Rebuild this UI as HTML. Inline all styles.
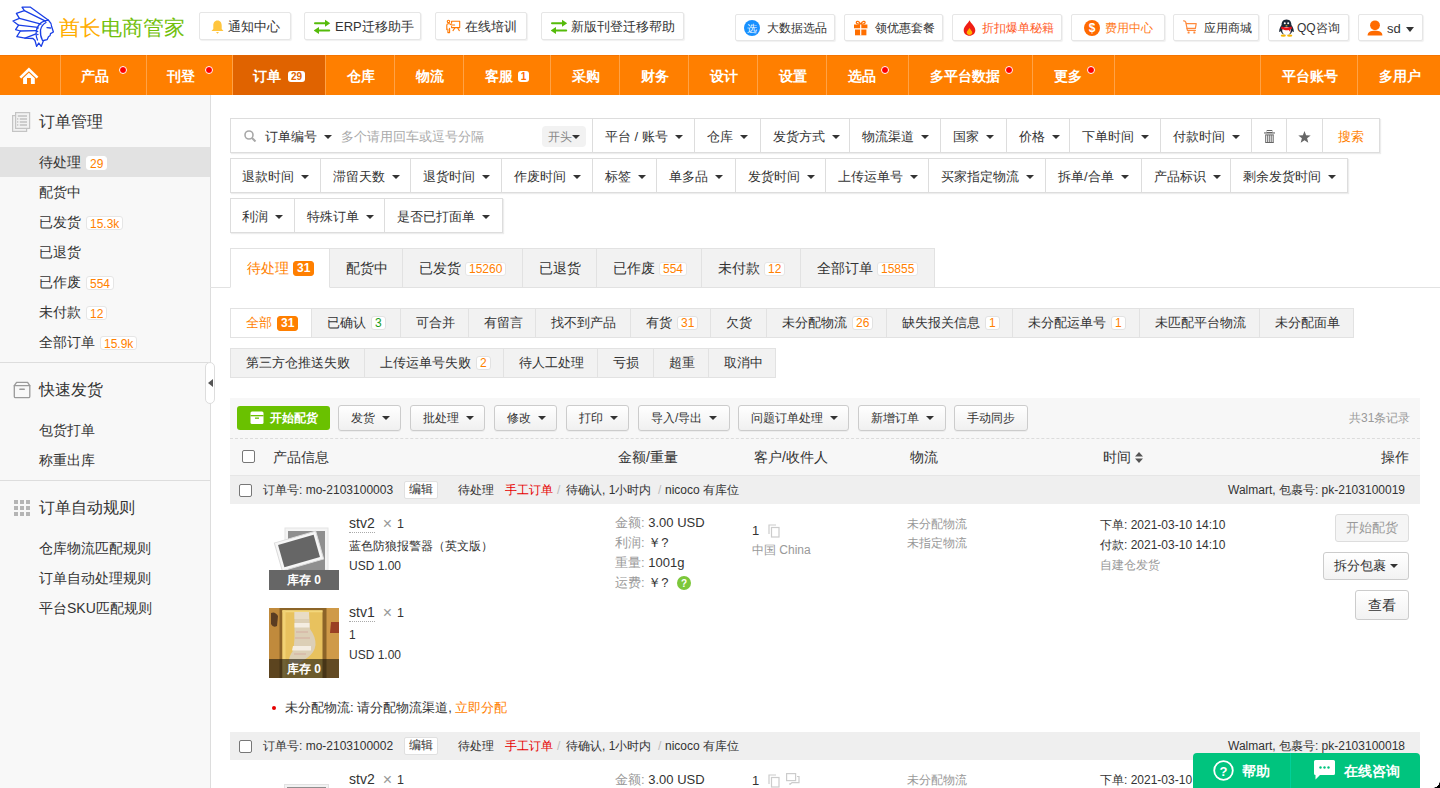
<!DOCTYPE html>
<html><head><meta charset="utf-8">
<style>
*{box-sizing:border-box;}
html,body{margin:0;padding:0;}
body{width:1440px;height:788px;overflow:hidden;position:relative;background:#fff;font-family:"Liberation Sans",sans-serif;color:#333;}
.abs{position:absolute;}
/* header */
.hb{position:absolute;top:12px;height:28px;border:1px solid #e6e6e6;border-radius:2px;background:#fff;box-shadow:1px 1px 1px rgba(0,0,0,.06);font-size:13px;line-height:28px;white-space:nowrap;}
.hb2{top:14px;height:27px;font-size:12px;line-height:27px;}
.hb .ic{position:absolute;}
.hb .t{position:absolute;top:0;}
/* nav */
.nav{position:absolute;left:0;top:55px;width:1440px;height:40px;background:#ff7f00;border-top:1px solid #f57400;}
.ni{position:absolute;top:-1px;height:40px;border-left:1px solid #ffa246;color:#fff;font-weight:bold;font-size:14px;line-height:40px;}
.ni .t{position:absolute;top:1px;}
.dot{position:absolute;top:11px;width:8px;height:8px;border-radius:50%;background:#f00;border:1px solid #fff;}
.nbadge{position:absolute;top:16px;height:11px;background:#fff;color:#ff6a00;border-radius:3px;font-size:10px;line-height:11px;text-align:center;}
/* sidebar */
.side{position:absolute;left:0;top:95px;width:211px;height:693px;background:#f8f8f8;border-right:1px solid #ddd;}
.sh{position:absolute;left:39px;font-size:16px;line-height:20px;color:#333;}
.si{position:absolute;left:39px;font-size:14px;line-height:20px;color:#333;white-space:nowrap;}
.sbadge{display:inline-block;vertical-align:top;margin-top:4px;margin-left:5px;height:14px;padding:0 3px;border:1px solid #e6e6e6;border-radius:3px;background:#fff;color:#ff7f00;font-size:12px;line-height:14px;}
.sdiv{position:absolute;left:0;width:210px;height:1px;background:#ddd;}

/* main */
.fr{position:absolute;left:230px;height:35px;border:1px solid #ddd;box-shadow:1px 1px 1px rgba(0,0,0,.07);background:#fff;}
.fi{position:absolute;top:0;height:33px;border-left:1px solid #ddd;font-size:13px;line-height:36px;color:#333;white-space:nowrap;padding-left:12px;}
.fi:first-child{border-left:none;}
.car{display:inline-block;vertical-align:middle;margin-left:7px;margin-top:-2px;width:0;height:0;border-left:4px solid transparent;border-right:4px solid transparent;border-top:4px solid #333;}
.tabs{position:absolute;left:210px;top:248px;width:1230px;height:40px;border-bottom:1px solid #e2e2e2;}
.tb{position:absolute;top:248px;height:40px;background:#f2f2f2;border:1px solid #e2e2e2;border-left:none;font-size:14px;line-height:38px;color:#333;padding-left:16px;white-space:nowrap;}
.tb.act{background:#fff;color:#ff7f00;border-left:1px solid #e2e2e2;border-bottom:1px solid #fff;height:40px;}
.tbd{display:inline-block;vertical-align:top;margin-top:13px;margin-left:4px;height:14px;padding:0 3px;border:1px solid #e6e6e6;border-radius:3px;background:#fff;color:#ff7f00;font-size:12px;line-height:12px;}
.tbd.fill{background:#ff7f00;border-color:#ff7f00;color:#fff;font-weight:bold;height:15px;line-height:13px;margin-top:12px;}
.st{position:absolute;height:30px;background:#f2f2f2;border:1px solid #e2e2e2;}
.sti{position:absolute;top:0;height:28px;border-left:1px solid #e2e2e2;font-size:13px;line-height:28px;color:#333;padding-left:15px;white-space:nowrap;}
.sti:first-child{border-left:none;}
.sti.act{background:#fff;color:#ff7f00;}
.std{display:inline-block;vertical-align:top;margin-top:7px;margin-left:5px;height:14px;padding:0 3px;border:1px solid #e2e2e2;border-radius:3px;background:#fff;color:#ff7f00;font-size:12px;line-height:12px;}
.std.fill{background:#ff7f00;border-color:#ff7f00;color:#fff;font-weight:bold;height:15px;line-height:13px;}
.btn{position:absolute;top:405px;height:26px;border:1px solid #ccc;border-radius:3px;background:linear-gradient(#fff,#f0f0f0);font-size:12px;line-height:24px;color:#333;padding-left:12px;white-space:nowrap;box-shadow:0 1px 0 rgba(0,0,0,.04);}
.cb{position:absolute;width:13px;height:13px;border:1px solid #777;border-radius:2px;background:#fff;}
.th{position:absolute;top:448px;font-size:14px;line-height:18px;color:#333;white-space:nowrap;}
.oh{position:absolute;left:230px;width:1190px;height:28px;background:#efefef;font-size:12px;line-height:28px;color:#333;white-space:nowrap;}
.oh span{position:absolute;top:0;}
.oh .tag{position:absolute;top:5px;height:18px;border:1px solid #e0e0e0;border-radius:2px;background:#fff;line-height:15px;padding:0 4px;font-size:12px;}
.t12{position:absolute;font-size:12px;line-height:16px;white-space:nowrap;color:#333;}
.gray{color:#999;}
.ab{position:absolute;border:1px solid #ccc;border-radius:3px;background:linear-gradient(#fff,#f2f2f2);font-size:13px;color:#333;white-space:nowrap;text-align:center;}
</style></head>
<body>
<!-- HEADER -->
<svg class="abs" style="left:0;top:0" width="58" height="50" viewBox="0 0 58 50">
<g fill="none" stroke="#1a3fe6" stroke-width="1.3" stroke-linejoin="round" stroke-linecap="round">
<path d="M22 7.2 L30.5 7.2 L48.5 20.2 Q51.5 23 51.6 26.5 L53.4 32 L50.5 33.6 Q50.6 36 48.6 36.6 L47.2 39.6 L43.5 40.5 L41.2 46.4 L38.8 43 L36.6 46.4 L35 40.5 L33 38.5 L25 38.2 L16.8 36.6 L20.3 31 L15.6 29.6 L18.6 25.2 L13 21 L19.4 18.3 L16.4 13.3 L24.4 10.7 Z"/>
<path d="M24.4 10.7 L45.5 21.2"/>
<path d="M19.4 18.3 L41 24.2"/>
<path d="M18.6 25.2 L38 27.4"/>
<path d="M20.3 31 L36.6 30.6"/>
<path d="M25 38.2 L36 33.8"/>
<path d="M48.5 20.2 Q40 21 37 28 Q35 35 37.5 40"/>
<path d="M46 22.5 Q41.5 25 40.5 30 Q40 36 42.5 40.5"/>
<path d="M47 27.6 L50.5 28"/>
</g>
<g fill="#1a3fe6"><circle cx="38.6" cy="25.5" r="0.8"/><circle cx="37.8" cy="28.5" r="0.8"/><circle cx="37.5" cy="31.5" r="0.8"/><circle cx="37.8" cy="34.5" r="0.8"/></g>
</svg>
<div class="abs" style="left:59px;top:14.5px;font-size:20.8px;line-height:26px;white-space:nowrap;font-weight:500;"><span style="color:#ffad00">酋长</span><span style="color:#72c00c">电商管家</span></div>

<div class="hb" style="left:199px;width:92px;">
 <svg class="ic" style="left:11px;top:7px" width="13" height="14" viewBox="0 0 13 14"><path d="M6.5 0.5 C3.5 0.5 2.3 3 2.3 5.5 L2.3 9 L0.5 11 L12.5 11 L10.7 9 L10.7 5.5 C10.7 3 9.5 0.5 6.5 0.5Z M5 12 L8 12 L6.5 13.8Z" fill="#ffc53d"/></svg>
 <span class="t" style="left:28px">通知中心</span></div>
<div class="hb" style="left:304px;width:117px;">
 <svg class="ic" style="left:9px;top:6px" width="17" height="16" viewBox="0 0 17 16"><g fill="#55bb0a"><rect x="0" y="3.3" width="12" height="2" rx="1"/><path d="M11 0.8 L16.2 4.3 L11 7.8Z"/><rect x="4" y="10.5" width="12.2" height="2" rx="1"/><path d="M5 8 L-0.2 11.5 L5 15Z"/></g></svg>
 <span class="t" style="left:30px">ERP迁移助手</span></div>
<div class="hb" style="left:435px;width:92px;">
 <svg class="ic" style="left:9px;top:6px" width="17" height="16" viewBox="0 0 17 16"><g fill="none" stroke="#ff7800" stroke-width="1.1" stroke-linecap="round" stroke-linejoin="round"><circle cx="3.5" cy="2.4" r="1.2"/><path d="M1.8 10.6 V6.2 Q1.8 4.8 3.2 4.8 H4.6 L6.6 6 H9.6"/><path d="M2.9 10 V13.6 H4.6 V9.4"/><path d="M6.6 4.2 V2.3 H14.7 V8.6 H6.6 V7.6"/><path d="M8 11.6 L10 8.8 M12.6 8.8 L14.3 11.6"/></g></svg>
 <span class="t" style="left:29px">在线培训</span></div>
<div class="hb" style="left:541px;width:143px;">
 <svg class="ic" style="left:9px;top:6px" width="17" height="16" viewBox="0 0 17 16"><g fill="#55bb0a"><rect x="0" y="3.3" width="12" height="2" rx="1"/><path d="M11 0.8 L16.2 4.3 L11 7.8Z"/><rect x="4" y="10.5" width="12.2" height="2" rx="1"/><path d="M5 8 L-0.2 11.5 L5 15Z"/></g></svg>
 <span class="t" style="left:29px">新版刊登迁移帮助</span></div>

<div class="hb hb2" style="left:735px;width:100px;">
 <svg class="ic" style="left:8px;top:5px" width="16" height="16" viewBox="0 0 16 16"><circle cx="8" cy="8" r="8" fill="#1890ff"/><text x="8" y="12" font-size="10" fill="#fff" text-anchor="middle" font-family="Liberation Sans">选</text></svg>
 <span class="t" style="left:31px">大数据选品</span></div>
<div class="hb hb2" style="left:844px;width:99px;">
 <svg class="ic" style="left:9px;top:5px" width="14" height="16" viewBox="0 0 14 16"><g fill="#ff6f00"><rect x="0" y="4.5" width="13.4" height="4"/><rect x="1" y="9.3" width="11.4" height="6"/></g><g fill="none" stroke="#ff6f00" stroke-width="1.3"><path d="M6.7 4.3 C5 1 2.3 0.6 2.3 2.6 C2.3 4 4.5 4.3 6.7 4.3Z"/><path d="M6.7 4.3 C8.4 1 11.1 0.6 11.1 2.6 C11.1 4 8.9 4.3 6.7 4.3Z"/></g><rect x="6.1" y="4.5" width="1.2" height="11" fill="#fff"/><rect x="0" y="8.5" width="13.4" height="0.8" fill="#fff"/></svg>
 <span class="t" style="left:30px">领优惠套餐</span></div>
<div class="hb hb2" style="left:952px;width:110px;">
 <svg class="ic" style="left:10px;top:5px" width="13" height="16" viewBox="0 0 13 16"><path d="M6.5 0.3 C8 3.5 12.3 6.5 12.3 10.3 C12.3 13.5 9.8 15.8 6.5 15.8 C3.2 15.8 0.7 13.5 0.7 10.3 C0.7 6.5 5 3.5 6.5 0.3Z" fill="#f01e14"/><path d="M6.5 8 C7.5 10 9.3 11 9.3 12.6 C9.3 14.2 8 15 6.5 15 C5 15 3.7 14.2 3.7 12.6 C3.7 11 5.5 10 6.5 8Z" fill="#ffb300"/></svg>
 <span class="t" style="left:29px;color:#ff5a1f">折扣爆单秘籍</span></div>
<div class="hb hb2" style="left:1071px;width:94px;">
 <svg class="ic" style="left:12px;top:5px" width="16" height="16" viewBox="0 0 16 16"><circle cx="8" cy="8" r="8" fill="#ff6a00"/><text x="8" y="12.3" font-size="12" font-weight="bold" fill="#fff" text-anchor="middle" font-family="Liberation Sans">$</text></svg>
 <span class="t" style="left:33px;color:#ff7a1a">费用中心</span></div>
<div class="hb hb2" style="left:1173px;width:86px;">
 <svg class="ic" style="left:9px;top:5px" width="14" height="15" viewBox="0 0 14 15"><g fill="none" stroke="#ff8a3d" stroke-width="1.2" stroke-linejoin="round" stroke-linecap="round"><path d="M0.6 0.8 Q2.2 0.6 2.8 2.2 L4.4 10.4 H12.4"/><path d="M3.3 3.6 H13.2 L12.4 8.4 H4"/></g><g fill="#ff8a3d"><rect x="4.6" y="11.6" width="2" height="2" rx="0.5"/><rect x="10.4" y="11.6" width="2" height="2" rx="0.5"/></g></svg>
 <span class="t" style="left:30px">应用商城</span></div>
<div class="hb hb2" style="left:1268px;width:81px;">
 <svg class="ic" style="left:9px;top:4px" width="17" height="18" viewBox="0 0 17 18"><path d="M8.5 0.5 C4.5 0.5 3.6 3.5 3.6 6 C2.5 7.5 1 10 1.2 12.5 C1.5 13.5 2.2 12.8 2.8 12 C3.2 13.5 4 14.5 5 15.2 H12 C13 14.5 13.8 13.5 14.2 12 C14.8 12.8 15.5 13.5 15.8 12.5 C16 10 14.5 7.5 13.4 6 C13.4 3.5 12.5 0.5 8.5 0.5Z" fill="#1c2a3a"/><ellipse cx="8.5" cy="11.8" rx="4.3" ry="4" fill="#fff"/><path d="M3.4 7.4 Q8.5 9.6 13.6 7.4 L14 9.6 Q12.5 10.5 12 10.6 L12.4 13 L10.6 11 Q8.5 11.4 6.4 11 Q4.5 10.5 3 9.6Z" fill="#e8141c"/><circle cx="6.8" cy="4.2" r="1" fill="#fff"/><circle cx="10.2" cy="4.2" r="1" fill="#fff"/><path d="M6.8 5.6 Q8.5 7 10.2 5.6 L8.5 7.2Z" fill="#f7b500"/><ellipse cx="5.3" cy="16.6" rx="2.6" ry="1.2" fill="#f7b500"/><ellipse cx="11.7" cy="16.6" rx="2.6" ry="1.2" fill="#f7b500"/></svg>
 <span class="t" style="left:28px">QQ咨询</span></div>
<div class="hb hb2" style="left:1358px;width:65px;">
 <svg class="ic" style="left:8px;top:5px" width="16" height="16" viewBox="0 0 16 16"><circle cx="8" cy="5.3" r="4.9" fill="#ff6a00"/><path d="M0.6 15.5 C0.6 12 3.5 10.8 8 10.8 C12.5 10.8 15.4 12 15.4 15.5Z" fill="#ff6a00"/></svg>
 <span class="t" style="left:28px;font-size:13px;">sd</span>
 <svg class="ic" style="left:47px;top:12px" width="8" height="5" viewBox="0 0 8 5"><path d="M0 0 H8 L4 5Z" fill="#333"/></svg></div>

<!-- NAV -->
<div class="nav">
 <div class="ni" style="left:0;width:60px;border-left:none;">
  <svg class="abs" style="left:19px;top:11px" width="21" height="19" viewBox="-1 -1 21 19"><path d="M8.9 0.6 L18.4 9.8 L16.6 11.6 L8.9 4.2 L1.2 11.6 L-0.6 9.8Z" fill="#fff"/><path d="M3.1 11.2 L8.9 5.7 L14.8 11.2 V17 H10.9 V10.9 H7 V17 H3.1Z" fill="#fff"/></svg></div>
 <div class="ni" style="left:60px;width:86px;"><span class="t" style="left:20px">产品</span><span class="dot" style="left:58px"></span></div>
 <div class="ni" style="left:146px;width:86px;"><span class="t" style="left:20px">刊登</span><span class="dot" style="left:58px"></span></div>
 <div class="ni" style="left:232px;width:93px;background:#e06300;"><span class="t" style="left:20px">订单</span><span class="nbadge" style="left:55px;width:17px;color:#e06300">29</span></div>
 <div class="ni" style="left:325px;width:69px;"><span class="t" style="left:21px">仓库</span></div>
 <div class="ni" style="left:394px;width:69px;"><span class="t" style="left:21px">物流</span></div>
 <div class="ni" style="left:463px;width:87px;"><span class="t" style="left:21px">客服</span><span class="nbadge" style="left:54px;width:11px;top:16px;height:11px;line-height:11px;font-weight:bold;">1</span></div>
 <div class="ni" style="left:550px;width:69px;"><span class="t" style="left:21px">采购</span></div>
 <div class="ni" style="left:619px;width:69px;"><span class="t" style="left:21px">财务</span></div>
 <div class="ni" style="left:688px;width:69px;"><span class="t" style="left:21px">设计</span></div>
 <div class="ni" style="left:757px;width:69px;"><span class="t" style="left:21px">设置</span></div>
 <div class="ni" style="left:826px;width:82px;"><span class="t" style="left:21px">选品</span><span class="dot" style="left:54px"></span></div>
 <div class="ni" style="left:908px;width:124px;"><span class="t" style="left:21px">多平台数据</span><span class="dot" style="left:96px"></span></div>
 <div class="ni" style="left:1032px;width:82px;"><span class="t" style="left:21px">更多</span><span class="dot" style="left:54px"></span></div>
 <div class="ni" style="left:1114px;width:146px;"></div>
 <div class="ni" style="left:1260px;width:97px;"><span class="t" style="left:21px">平台账号</span></div>
 <div class="ni" style="left:1357px;width:83px;"><span class="t" style="left:21px">多用户</span></div>
</div>

<!-- SIDEBAR -->
<div class="side">
 <svg class="abs" style="left:12px;top:17px" width="19" height="20" viewBox="0 0 19 20"><g fill="#f2f2f2" stroke="#c4c4c4" stroke-width="1.2"><rect x="0.6" y="3.6" width="14" height="15.8"/><rect x="3.6" y="0.6" width="14" height="15.8"/></g><g stroke="#bdbdbd" stroke-width="1.4"><path d="M5.8 4 H15"/><path d="M7.8 7 H15"/><path d="M7.8 10 H15"/><path d="M7.8 13 H15"/></g><g fill="#bdbdbd"><rect x="5" y="6.3" width="1.3" height="1.3"/><rect x="5" y="9.3" width="1.3" height="1.3"/><rect x="5" y="12.3" width="1.3" height="1.3"/></g></svg>
 <div class="sh" style="top:17px">订单管理</div>
 <div class="abs" style="left:0;top:52px;width:210px;height:30px;background:#e2e2e2"></div>
 <div class="si" style="top:57px">待处理<span class="sbadge" style="border-color:#fff">29</span></div>
 <div class="si" style="top:87px">配货中</div>
 <div class="si" style="top:117px">已发货<span class="sbadge">15.3k</span></div>
 <div class="si" style="top:147px">已退货</div>
 <div class="si" style="top:177px">已作废<span class="sbadge">554</span></div>
 <div class="si" style="top:207px">未付款<span class="sbadge">12</span></div>
 <div class="si" style="top:237px">全部订单<span class="sbadge">15.9k</span></div>
 <div class="sdiv" style="top:267px"></div>
 <svg class="abs" style="left:13px;top:286px" width="18" height="18" viewBox="0 0 18 18"><g fill="none" stroke="#9a9a9a" stroke-width="1.3" stroke-linejoin="round" stroke-linecap="round"><path d="M3.6 1.3 H14.6 L16.8 4.7 H1.3Z"/><path d="M1.3 4.7 V15.4 Q1.3 16.6 2.5 16.6 H15.6 Q16.8 16.6 16.8 15.4 V4.7"/><path d="M6.9 8.3 H11.2" stroke-width="1.6"/></g></svg>
 <div class="sh" style="top:285px">快速发货</div>
 <div class="si" style="top:325px">包货打单</div>
 <div class="si" style="top:355px">称重出库</div>
 <div class="sdiv" style="top:385px"></div>
 <svg class="abs" style="left:14px;top:405px" width="16" height="16" viewBox="0 0 16 16"><g fill="#b5b5b5"><rect x="0" y="0" width="4" height="4"/><rect x="6" y="0" width="4" height="4"/><rect x="12" y="0" width="4" height="4"/><rect x="0" y="6" width="4" height="4"/><rect x="6" y="6" width="4" height="4"/><rect x="12" y="6" width="4" height="4"/><rect x="0" y="12" width="4" height="4"/><rect x="6" y="12" width="4" height="4"/><rect x="12" y="12" width="4" height="4"/></g></svg>
 <div class="sh" style="top:403px">订单自动规则</div>
 <div class="si" style="top:443px">仓库物流匹配规则</div>
 <div class="si" style="top:473px">订单自动处理规则</div>
 <div class="si" style="top:503px">平台SKU匹配规则</div>
</div>
<div class="abs" style="left:205px;top:362px;width:10px;height:42px;background:#fff;border:1px solid #ddd;border-radius:5px;">
 <svg class="abs" style="left:2px;top:16px" width="5" height="8" viewBox="0 0 5 8"><path d="M5 0 V8 L0 4Z" fill="#555"/></svg></div>

<!-- MAIN -->
<!-- FILTER ROWS -->
<div class="fr" style="top:118px;width:1150px;">
 <div class="fi" style="left:0;width:361px;">
  <svg class="abs" style="left:13px;top:11px" width="13" height="12" viewBox="0 0 13 12"><circle cx="5" cy="5" r="4" fill="none" stroke="#a8a8a8" stroke-width="1.6"/><path d="M8 8 L11.5 11.5" stroke="#a8a8a8" stroke-width="2"/></svg>
  <span class="abs" style="left:34px;top:0">订单编号<i class="car"></i></span>
  <span class="abs" style="left:110px;top:0;color:#aaa">多个请用回车或逗号分隔</span>
  <span class="abs" style="left:311px;top:7px;width:44px;height:21px;background:#f2f2f2;border-radius:4px;font-size:12px;line-height:23px;color:#888;padding-left:6px;">开头<i class="car" style="margin-left:0;border-top-color:#333"></i></span>
 </div>
 <div class="fi" style="left:361px;width:102px;">平台 / 账号<i class="car"></i></div>
 <div class="fi" style="left:463px;width:66px;">仓库<i class="car"></i></div>
 <div class="fi" style="left:529px;width:89px;">发货方式<i class="car"></i></div>
 <div class="fi" style="left:618px;width:91px;">物流渠道<i class="car"></i></div>
 <div class="fi" style="left:709px;width:66px;">国家<i class="car"></i></div>
 <div class="fi" style="left:775px;width:63px;">价格<i class="car"></i></div>
 <div class="fi" style="left:838px;width:91px;">下单时间<i class="car"></i></div>
 <div class="fi" style="left:929px;width:91px;">付款时间<i class="car"></i></div>
 <div class="fi" style="left:1020px;width:35px;padding:0;">
  <svg class="abs" style="left:12px;top:11px" width="11" height="14" viewBox="0 0 11 14"><rect x="3.2" y="0.5" width="4.6" height="2" fill="none" stroke="#666" stroke-width="1"/><rect x="0" y="2.4" width="11" height="1.1" fill="#666"/><rect x="1.2" y="4.4" width="8.6" height="8.6" fill="#666"/><g fill="#fff"><rect x="2.2" y="5.4" width="1" height="6.6"/><rect x="4.25" y="5.4" width="1" height="6.6"/><rect x="6.3" y="5.4" width="1" height="6.6"/><rect x="8.35" y="5.4" width="0.8" height="6.6"/></g></svg></div>
 <div class="fi" style="left:1055px;width:36px;padding:0;">
  <svg class="abs" style="left:11px;top:12px" width="13" height="12" viewBox="0 0 13 12"><path d="M6.5 0 L8.1 4.3 L12.7 4.5 L9.1 7.3 L10.3 11.8 L6.5 9.2 L2.7 11.8 L3.9 7.3 L0.3 4.5 L4.9 4.3Z" fill="#666"/></svg></div>
 <div class="fi" style="left:1091px;width:57px;color:#ff7f00;padding-left:15px;">搜索</div>
</div>
<div class="fr" style="top:158px;width:1118px;">
 <div class="fi" style="left:0;width:89px;padding-left:11px;">退款时间<i class="car"></i></div>
 <div class="fi" style="left:89px;width:90px;">滞留天数<i class="car"></i></div>
 <div class="fi" style="left:179px;width:91px;">退货时间<i class="car"></i></div>
 <div class="fi" style="left:270px;width:91px;">作废时间<i class="car"></i></div>
 <div class="fi" style="left:361px;width:64px;">标签<i class="car"></i></div>
 <div class="fi" style="left:425px;width:79px;">单多品<i class="car"></i></div>
 <div class="fi" style="left:504px;width:90px;">发货时间<i class="car"></i></div>
 <div class="fi" style="left:594px;width:103px;">上传运单号<i class="car"></i></div>
 <div class="fi" style="left:697px;width:117px;">买家指定物流<i class="car"></i></div>
 <div class="fi" style="left:814px;width:96px;">拆单/合单<i class="car"></i></div>
 <div class="fi" style="left:910px;width:89px;">产品标识<i class="car"></i></div>
 <div class="fi" style="left:999px;width:117px;">剩余发货时间<i class="car"></i></div>
</div>
<div class="fr" style="top:198px;width:273px;">
 <div class="fi" style="left:0;width:63px;padding-left:11px;">利润<i class="car"></i></div>
 <div class="fi" style="left:63px;width:90px;">特殊订单<i class="car"></i></div>
 <div class="fi" style="left:153px;width:118px;">是否已打面单<i class="car"></i></div>
</div>

<!-- STATUS TABS -->
<div class="abs" style="left:210px;top:287px;width:1230px;height:1px;background:#e2e2e2"></div>
<div class="tb act" style="left:230px;width:100px;">待处理<span class="tbd fill">31</span></div>
<div class="tb" style="left:330px;width:73px;">配货中</div>
<div class="tb" style="left:403px;width:120px;">已发货<span class="tbd">15260</span></div>
<div class="tb" style="left:523px;width:74px;">已退货</div>
<div class="tb" style="left:597px;width:105px;">已作废<span class="tbd">554</span></div>
<div class="tb" style="left:702px;width:99px;">未付款<span class="tbd">12</span></div>
<div class="tb" style="left:801px;width:134px;">全部订单<span class="tbd">15855</span></div>

<!-- SUB TABS -->
<div class="st" style="left:230px;top:308px;width:1124px;">
 <div class="sti act" style="left:0;width:81px;">全部<span class="std fill">31</span></div>
 <div class="sti" style="left:80px;width:89px;">已确认<span class="std" style="color:#1a9e1a">3</span></div>
 <div class="sti" style="left:169px;width:68px;">可合并</div>
 <div class="sti" style="left:237px;width:67px;">有留言</div>
 <div class="sti" style="left:304px;width:95px;">找不到产品</div>
 <div class="sti" style="left:399px;width:80px;">有货<span class="std">31</span></div>
 <div class="sti" style="left:479px;width:56px;">欠货</div>
 <div class="sti" style="left:535px;width:120px;">未分配物流<span class="std">26</span></div>
 <div class="sti" style="left:655px;width:126px;">缺失报关信息<span class="std">1</span></div>
 <div class="sti" style="left:781px;width:127px;">未分配运单号<span class="std">1</span></div>
 <div class="sti" style="left:908px;width:120px;">未匹配平台物流</div>
 <div class="sti" style="left:1028px;width:94px;">未分配面单</div>
</div>
<div class="st" style="left:230px;top:348px;width:546px;">
 <div class="sti" style="left:0;width:134px;">第三方仓推送失败</div>
 <div class="sti" style="left:133px;width:139px;">上传运单号失败<span class="std">2</span></div>
 <div class="sti" style="left:272px;width:95px;">待人工处理</div>
 <div class="sti" style="left:366px;width:56px;">亏损</div>
 <div class="sti" style="left:422px;width:55px;">超重</div>
 <div class="sti" style="left:477px;width:67px;">取消中</div>
</div>
<!-- TOOLBAR -->
<div class="abs" style="left:230px;top:398px;width:1190px;height:78px;background:#f7f7f7;"></div>
<div class="abs" style="left:230px;top:438px;width:1190px;height:0;border-top:1px dashed #dcdcdc;"></div>
<div class="abs" style="left:230px;top:475px;width:1190px;height:1px;background:#e6e6e6;"></div>
<div class="abs" style="left:237px;top:406px;width:93px;height:24px;background:#6ac100;border-radius:3px;color:#fff;font-size:12px;font-weight:bold;line-height:24px;white-space:nowrap;">
 <svg class="abs" style="left:13px;top:5px" width="14" height="13" viewBox="0 0 14 13"><path d="M2 0.5 H12 Q13.5 0.5 13.5 2 V11.5 Q13.5 13 12 13 H2 Q0.5 13 0.5 11.5 V2 Q0.5 0.5 2 0.5Z" fill="#fff"/><rect x="0.5" y="4" width="13" height="1.3" fill="#6ac100"/><rect x="5" y="6.5" width="4" height="1.3" fill="#6ac100"/></svg>
 <span class="abs" style="left:33px;top:0">开始配货</span></div>
<div class="btn" style="left:338px;width:63px;">发货<i class="car"></i></div>
<div class="btn" style="left:410px;width:75px;">批处理<i class="car"></i></div>
<div class="btn" style="left:494px;width:63px;">修改<i class="car"></i></div>
<div class="btn" style="left:566px;width:63px;">打印<i class="car"></i></div>
<div class="btn" style="left:638px;width:92px;">导入/导出<i class="car"></i></div>
<div class="btn" style="left:738px;width:111px;">问题订单处理<i class="car"></i></div>
<div class="btn" style="left:858px;width:88px;">新增订单<i class="car"></i></div>
<div class="btn" style="left:954px;width:74px;">手动同步</div>
<div class="t12 gray" style="left:1349px;top:410px;line-height:16px;">共31条记录</div>

<!-- TABLE HEADER -->
<div class="cb" style="left:242px;top:450px;"></div>
<div class="th" style="left:273px;">产品信息</div>
<div class="th" style="left:618px;">金额/重量</div>
<div class="th" style="left:754px;">客户/收件人</div>
<div class="th" style="left:910px;">物流</div>
<div class="th" style="left:1103px;">时间<svg style="margin-left:4px;vertical-align:-1px" width="8" height="11" viewBox="0 0 8 11"><path d="M4 0 L8 4.5 H0Z M4 11 L8 6.5 H0Z" fill="#555"/></svg></div>
<div class="th" style="left:1381px;">操作</div>

<!-- ORDER 1 -->
<div class="oh" style="top:476px;">
 <div class="cb" style="left:9px;top:8px;"></div>
 <span style="left:33px">订单号: mo-2103100003</span>
 <span class="tag" style="left:174px;">编辑</span>
 <span style="left:228px">待处理</span>
 <span style="left:275px;color:#e60000">手工订单</span>
 <span style="left:327px;color:#bbb">/</span>
 <span style="left:336px">待确认, 1小时内</span>
 <span style="left:428px;color:#bbb">/</span>
 <span style="left:435px">nicoco 有库位</span>
 <span style="right:15px;">Walmart, 包裹号: pk-2103100019</span>
</div>

<!-- product 1 -->
<div class="abs" style="left:269px;top:520px;width:70px;height:70px;background:#fff;overflow:hidden;">
 <svg class="abs" style="left:0;top:0" width="70" height="50" viewBox="0 0 70 50">
  <rect x="16" y="8" width="43" height="42" fill="#f4f4f4" stroke="#e4e4e4" stroke-width="1"/>
  <rect x="19" y="11" width="37" height="39" fill="#8f8f8f"/>
  <g transform="rotate(-16 30 31)"><rect x="8.5" y="16.5" width="43" height="29" fill="#f6f6f6" stroke="#dcdcdc" stroke-width="1"/><rect x="11.5" y="19.5" width="37" height="23" fill="#666"/></g>
 </svg>
 <div class="abs" style="left:0;top:50px;width:70px;height:20px;background:#666;color:#fff;font-size:12px;font-weight:bold;line-height:20px;text-align:center;">库存 0</div>
</div>
<div class="t12" style="left:349px;top:514px;font-size:14px;line-height:18px;"><span style="border-bottom:1px dotted #aaa;padding-bottom:1px;">stv2</span><span style="color:#999;margin-left:8px;font-size:16px;line-height:16px;position:relative;top:1px;">×</span><span style="margin-left:5px;font-size:12.5px;">1</span></div>
<div class="t12" style="left:349px;top:538px;">蓝色防狼报警器（英文版）</div>
<div class="t12" style="left:349px;top:558px;">USD 1.00</div>

<!-- product 2 -->
<div class="abs" style="left:269px;top:608px;width:70px;height:70px;overflow:hidden;background:#d9a23b;">
 <svg class="abs" style="left:0;top:0" width="70" height="70" viewBox="0 0 70 70">
  <rect width="70" height="70" fill="#c99443"/>
  <rect x="0" y="0" width="11" height="70" fill="#c08a3c"/>
  <rect x="57" y="0" width="13" height="70" fill="#cf9a48"/>
  <rect x="10.5" y="0" width="47" height="70" fill="#8c6428"/>
  <rect x="13.5" y="2.3" width="40" height="68" fill="#e8c25e"/>
  <rect x="13.5" y="2.3" width="40" height="2" fill="#f3d77c"/>
  <rect x="13.5" y="2.3" width="3" height="68" fill="#f1d274"/>
  <path d="M25.5 4 H40 L41 21 Q47 29 46.5 37 Q45.5 45 38 50 L28 57 Q21 60 20 53 Q20 48 24.5 42 L25.5 30Z" fill="#dccfb6"/>
  <path d="M25.5 4 H40 V11 H25.5Z" fill="#e8dcc6"/>
  <path d="M25.5 15 H40.5 V19.5 H25.5Z" fill="#f4ede2"/>
  <path d="M24 38 H42 V42.5 H23Z" fill="#f4ede2"/>
  <path d="M27 24 H39 M26 30 H41 M25 46 H37" stroke="#d3ad9f" stroke-width="1.2"/>
  <path d="M2 5 Q6 3 9 8 L8 18 Q4 20 2 16Z" fill="#5a3c22"/>
  <path d="M62 14 H70 V25 H61Z" fill="#9a4024"/>
 </svg>
 <div class="abs" style="left:0;top:51px;width:70px;height:19px;background:rgba(25,22,12,.6);color:#fff;font-size:12px;font-weight:bold;line-height:20px;text-align:center;">库存 0</div>
</div>
<div class="t12" style="left:349px;top:603px;font-size:14px;line-height:18px;"><span style="border-bottom:1px dotted #aaa;padding-bottom:1px;">stv1</span><span style="color:#999;margin-left:8px;font-size:16px;line-height:16px;position:relative;top:1px;">×</span><span style="margin-left:5px;font-size:12.5px;">1</span></div>
<div class="t12" style="left:349px;top:627px;">1</div>
<div class="t12" style="left:349px;top:647px;">USD 1.00</div>

<!-- amount col -->
<div class="t12" style="left:615px;top:513px;line-height:20px;font-size:13px;"><span class="gray">金额:</span> 3.00 USD<br><span class="gray">利润:</span> ￥?<br><span class="gray">重量:</span> 1001g<br><span class="gray">运费:</span> ￥?</div>
<svg class="abs" style="left:677px;top:576px" width="14" height="14" viewBox="0 0 14 14"><circle cx="7" cy="7" r="7" fill="#7cc73a"/><text x="7" y="11" font-size="10" font-weight="bold" fill="#fff" text-anchor="middle" font-family="Liberation Sans">?</text></svg>

<!-- customer col -->
<div class="t12" style="left:752px;top:523px;font-size:13px;">1</div>
<svg class="abs" style="left:768px;top:524px" width="12" height="14" viewBox="0 0 12 14"><g fill="none" stroke="#ccc" stroke-width="1.2"><path d="M1 10 V1 H8"/><rect x="3.5" y="3.5" width="7.5" height="9.5"/></g></svg>
<div class="t12 gray" style="left:752px;top:542px;">中国 China</div>

<!-- logistics col -->
<div class="t12 gray" style="left:907px;top:515px;line-height:19px;">未分配物流<br>未指定物流</div>

<!-- time col -->
<div class="t12" style="left:1100px;top:515px;line-height:20px;">下单: 2021-03-10 14:10<br>付款: 2021-03-10 14:10<br><span class="gray">自建仓发货</span></div>

<!-- actions -->
<div class="ab" style="left:1335px;top:514px;width:74px;height:28px;line-height:26px;color:#999;background:#f5f5f5;border-color:#ddd;">开始配货</div>
<div class="ab" style="left:1323px;top:552px;width:86px;height:28px;line-height:26px;">拆分包裹<i class="car" style="margin-left:4px"></i></div>
<div class="ab" style="left:1355px;top:590px;width:54px;height:30px;line-height:28px;font-size:14px;">查看</div>

<!-- warning -->
<div class="abs" style="left:272px;top:706px;width:4px;height:4px;border-radius:50%;background:#e60000;"></div>
<div class="t12" style="left:285px;top:700px;font-size:13px;">未分配物流: 请分配物流渠道, <span style="color:#ff7f00">立即分配</span></div>

<!-- ORDER 2 -->
<div class="oh" style="top:732px;">
 <div class="cb" style="left:9px;top:8px;"></div>
 <span style="left:33px">订单号: mo-2103100002</span>
 <span class="tag" style="left:174px;">编辑</span>
 <span style="left:228px">待处理</span>
 <span style="left:275px;color:#e60000">手工订单</span>
 <span style="left:327px;color:#bbb">/</span>
 <span style="left:336px">待确认, 1小时内</span>
 <span style="left:428px;color:#bbb">/</span>
 <span style="left:435px">nicoco 有库位</span>
 <span style="right:15px;">Walmart, 包裹号: pk-2103100018</span>
</div>
<div class="abs" style="left:284px;top:784px;width:45px;height:10px;border:1px solid #e2e2e2;background:#f2f2f2;"><div style="margin:2px;height:8px;background:#8f8f8f"></div></div>
<div class="t12" style="left:349px;top:770px;font-size:14px;line-height:18px;"><span>stv2</span><span style="color:#999;margin-left:8px;font-size:16px;line-height:16px;position:relative;top:1px;">×</span><span style="margin-left:5px;font-size:12.5px;">1</span></div>
<div class="t12" style="left:615px;top:772px;font-size:13px;"><span class="gray">金额:</span> 3.00 USD</div>
<div class="t12" style="left:752px;top:773px;font-size:13px;">1</div>
<svg class="abs" style="left:768px;top:774px" width="12" height="14" viewBox="0 0 12 14"><g fill="none" stroke="#ccc" stroke-width="1.2"><path d="M1 10 V1 H8"/><rect x="3.5" y="3.5" width="7.5" height="9.5"/></g></svg>
<svg class="abs" style="left:786px;top:773px" width="14" height="12" viewBox="0 0 14 12"><g fill="none" stroke="#ccc" stroke-width="1.2"><rect x="0.6" y="0.6" width="9" height="7"/><path d="M4 10 V11.4 L6 9.6 H13 V3.5 H11"/></g></svg>
<div class="t12 gray" style="left:907px;top:772px;">未分配物流</div>
<div class="t12" style="left:1100px;top:772px;">下单: 2021-03-10 14:10</div>

<!-- HELP WIDGET -->
<div class="abs" style="left:1193px;top:753px;width:227px;height:40px;background:#00c47e;border-radius:4px;color:#fff;font-size:14px;font-weight:bold;line-height:36px;white-space:nowrap;">
 <svg class="abs" style="left:20px;top:7px" width="21" height="21" viewBox="0 0 21 21"><circle cx="10.5" cy="10.5" r="9.3" fill="none" stroke="#fff" stroke-width="1.8"/><text x="10.5" y="15.5" font-size="13" font-weight="bold" fill="#fff" text-anchor="middle" font-family="Liberation Sans">?</text></svg>
 <span class="abs" style="left:49px;top:0">帮助</span>
 <div class="abs" style="left:97px;top:0;width:1px;height:40px;background:#00d09a"></div>
 <svg class="abs" style="left:121px;top:7px" width="21" height="20" viewBox="0 0 21 20"><path d="M1.5 0 H19.5 Q21 0 21 1.5 V13.5 Q21 15 19.5 15 H6 L1.5 19.5 V15 Q0 15 0 13.5 V1.5 Q0 0 1.5 0Z" fill="#fff"/><circle cx="6.5" cy="7.5" r="1.2" fill="#00c47e"/><circle cx="10.5" cy="7.5" r="1.2" fill="#00c47e"/><circle cx="14.5" cy="7.5" r="1.2" fill="#00c47e"/></svg>
 <span class="abs" style="left:151px;top:0">在线咨询</span>
</div>

<div class="abs" style="left:1433px;top:781px;width:7px;height:7px;background:radial-gradient(circle at 0 0,rgba(0,0,0,0) 6.5px,#000 7px);"></div>
</body></html>
